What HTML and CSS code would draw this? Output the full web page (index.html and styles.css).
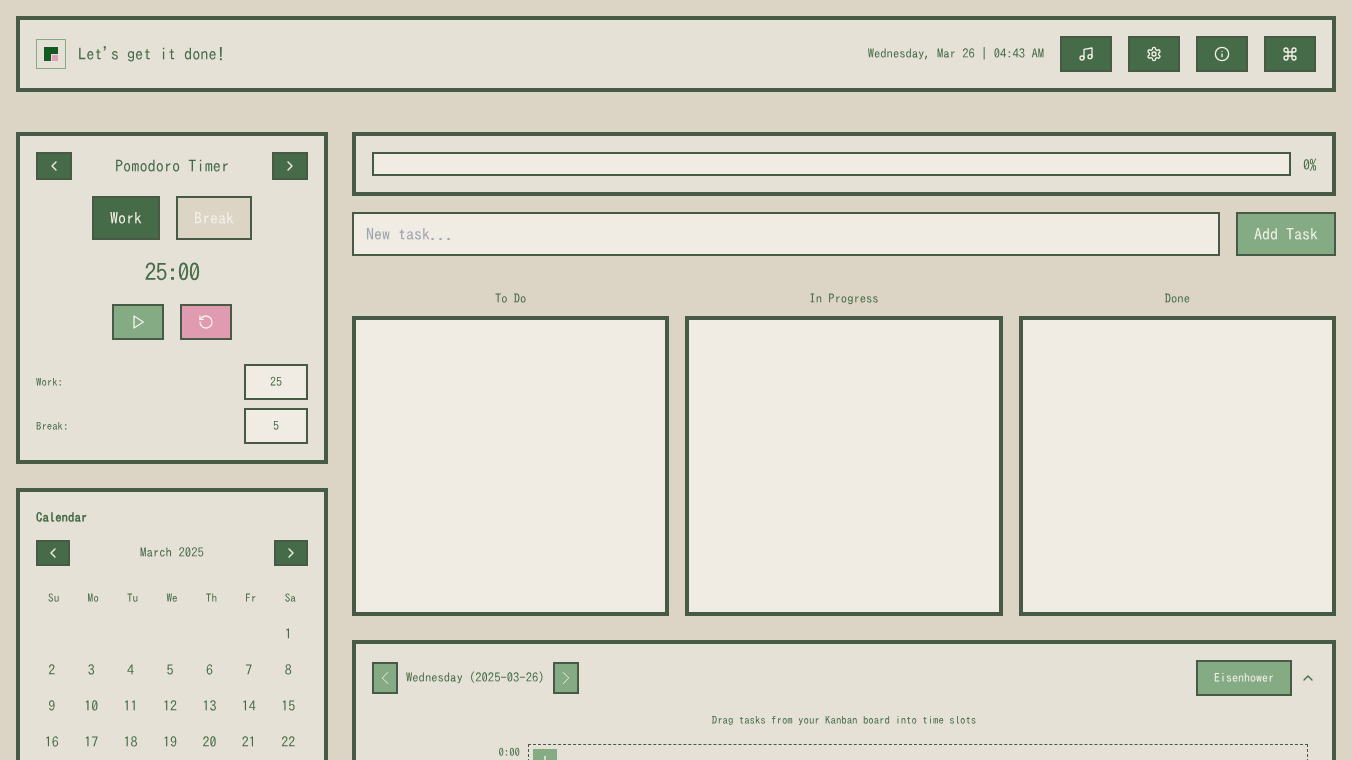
FILE: index.html
```html
<!DOCTYPE html>
<html lang="en">
<head>
<meta charset="utf-8">
<title>Let's get it done!</title>
<link rel="stylesheet" href="styles.css">
</head>
<body>
<header class="panel header">
  <div class="brand">
    <svg class="logo" viewBox="0 0 30 30" width="30" height="30"><rect x="0.5" y="0.5" width="29" height="29" fill="none" stroke="#85ab85"/><rect x="8" y="8" width="14" height="14" fill="#145a22"/><rect x="15" y="15" width="7" height="7" fill="#e4dfd3"/><rect x="16" y="16" width="6" height="6" fill="#e3a0b6"/></svg>
    <span class="brand-text">Let's get it done!</span>
  </div>
  <div class="header-right">
    <span class="clock">Wednesday, Mar 26 | 04:43 AM</span>
    <button class="btn dark icon-btn"><svg class="ico" viewBox="0 0 24 24"><path d="M9 18V5l12-2v13"/><circle cx="6" cy="18" r="3"/><circle cx="18" cy="16" r="3"/></svg></button>
    <button class="btn dark icon-btn"><svg class="ico" viewBox="0 0 24 24"><path d="M12.22 2h-.44a2 2 0 0 0-2 2v.18a2 2 0 0 1-1 1.73l-.43.25a2 2 0 0 1-2 0l-.15-.08a2 2 0 0 0-2.73.73l-.22.38a2 2 0 0 0 .73 2.73l.15.1a2 2 0 0 1 1 1.72v.51a2 2 0 0 1-1 1.74l-.15.09a2 2 0 0 0-.73 2.73l.22.38a2 2 0 0 0 2.73.73l.15-.08a2 2 0 0 1 2 0l.43.25a2 2 0 0 1 1 1.73V20a2 2 0 0 0 2 2h.44a2 2 0 0 0 2-2v-.18a2 2 0 0 1 1-1.73l.43-.25a2 2 0 0 1 2 0l.15.08a2 2 0 0 0 2.73-.73l.22-.39a2 2 0 0 0-.73-2.73l-.15-.08a2 2 0 0 1-1-1.74v-.5a2 2 0 0 1 1-1.74l.15-.09a2 2 0 0 0 .73-2.73l-.22-.38a2 2 0 0 0-2.73-.73l-.15.08a2 2 0 0 1-2 0l-.43-.25a2 2 0 0 1-1-1.73V4a2 2 0 0 0-2-2z"/><circle cx="12" cy="12" r="3"/></svg></button>
    <button class="btn dark icon-btn"><svg class="ico" viewBox="0 0 24 24"><circle cx="12" cy="12" r="10"/><path d="M12 16v-4"/><path d="M12 8h.01"/></svg></button>
    <button class="btn dark icon-btn"><svg class="ico" viewBox="0 0 24 24"><path d="M15 6v12a3 3 0 1 0 3-3H6a3 3 0 1 0 3 3V6a3 3 0 1 0-3 3h12a3 3 0 1 0-3-3"/></svg></button>
  </div>
</header>

<div class="layout">
  <aside class="side">
    <section class="panel pomo">
      <div class="pomo-top">
        <button class="btn dark nav"><svg class="ico" viewBox="0 0 24 24"><path d="m15 18-6-6 6-6"/></svg></button>
        <h2 class="pomo-title">Pomodoro Timer</h2>
        <button class="btn dark nav"><svg class="ico" viewBox="0 0 24 24"><path d="m9 18 6-6-6-6"/></svg></button>
      </div>
      <div class="modes">
        <button class="btn dark mode">Work</button>
        <button class="btn tan mode">Break</button>
      </div>
      <div class="time">25:00</div>
      <div class="controls">
        <button class="btn green ctl"><svg class="ico" viewBox="0 0 24 24"><path d="M6 3l14 9-14 9z"/></svg></button>
        <button class="btn pink ctl"><svg class="ico" viewBox="0 0 24 24"><path d="M3 12a9 9 0 1 0 9-9 9.75 9.75 0 0 0-6.74 2.74L3 8"/><path d="M3 3v5h5"/></svg></button>
      </div>
      <div class="setting"><label class="setting-label">Work:</label><input class="num" value="25"></div>
      <div class="setting"><label class="setting-label">Break:</label><input class="num" value="5"></div>
    </section>

    <section class="panel cal">
      <h3 class="cal-title">Calendar</h3>
      <div class="cal-nav">
        <button class="btn dark cal-btn"><svg class="ico" viewBox="0 0 24 24"><path d="m15 18-6-6 6-6"/></svg></button>
        <span class="cal-month">March 2025</span>
        <button class="btn dark cal-btn"><svg class="ico" viewBox="0 0 24 24"><path d="m9 18 6-6-6-6"/></svg></button>
      </div>
      <div class="cal-grid">
        <div class="dow">Su</div><div class="dow">Mo</div><div class="dow">Tu</div><div class="dow">We</div><div class="dow">Th</div><div class="dow">Fr</div><div class="dow">Sa</div>
        <div class="day"></div><div class="day"></div><div class="day"></div><div class="day"></div><div class="day"></div><div class="day"></div><div class="day">1</div>
        <div class="day">2</div><div class="day">3</div><div class="day">4</div><div class="day">5</div><div class="day">6</div><div class="day">7</div><div class="day">8</div>
        <div class="day">9</div><div class="day">10</div><div class="day">11</div><div class="day">12</div><div class="day">13</div><div class="day">14</div><div class="day">15</div>
        <div class="day">16</div><div class="day">17</div><div class="day">18</div><div class="day">19</div><div class="day">20</div><div class="day">21</div><div class="day">22</div>
        <div class="day">23</div><div class="day">24</div><div class="day">25</div><div class="day">26</div><div class="day">27</div><div class="day">28</div><div class="day">29</div>
        <div class="day">30</div><div class="day">31</div>
      </div>
    </section>
  </aside>

  <main class="main">
    <section class="panel progress">
      <div class="bar"></div>
      <span class="pct">0%</span>
    </section>
    <div class="add-row">
      <input class="task-input" placeholder="New task...">
      <button class="btn green add">Add Task</button>
    </div>
    <div class="board">
      <div class="col"><h4 class="col-title">To Do</h4><div class="col-box"></div></div>
      <div class="col"><h4 class="col-title">In Progress</h4><div class="col-box"></div></div>
      <div class="col"><h4 class="col-title">Done</h4><div class="col-box"></div></div>
    </div>
    <section class="panel sched">
      <div class="sched-top">
        <div class="sched-left">
          <button class="btn green day-btn"><svg class="ico thin" viewBox="0 0 24 24"><path d="m15 18-6-6 6-6"/></svg></button>
          <span class="sched-date">Wednesday (2025-03-26)</span>
          <button class="btn green day-btn"><svg class="ico thin" viewBox="0 0 24 24"><path d="m9 18 6-6-6-6"/></svg></button>
        </div>
        <div class="sched-right">
          <button class="btn green eisen">Eisenhower</button>
          <svg class="ico chev" viewBox="0 0 24 24"><path d="m18 15-6-6-6 6"/></svg>
        </div>
      </div>
      <p class="hint">Drag tasks from your Kanban board into time slots</p>
      <div class="slot"><span class="slot-time">0:00</span><div class="slot-box"><button class="plus"><svg class="ico" viewBox="0 0 24 24"><path d="M5 12h14"/><path d="M12 5v14"/></svg></button></div></div>
      <div class="slot"><span class="slot-time">1:00</span><div class="slot-box"><button class="plus"><svg class="ico" viewBox="0 0 24 24"><path d="M5 12h14"/><path d="M12 5v14"/></svg></button></div></div>
    </section>
  </main>
</div>
</body>
</html>
```
FILE: styles.css
```css
* { box-sizing: border-box; }
html, body { margin: 0; }
body {
  padding: 16px;
  background: #dcd5c6;
  color: #466b48;
  font-family: "IPAGothic", "Noto Sans Mono CJK JP", monospace;
  font-size: 16px;
  line-height: 24px;
  text-rendering: geometricPrecision;
  will-change: transform;
}
h2, h3, h4, p { margin: 0; font-weight: 400; }
button { font-family: inherit; cursor: pointer; padding: 0; text-rendering: inherit; }
input { font-family: inherit; text-rendering: inherit; }

.panel { background: #e5e1d6; border: 4px solid #465a46; }
.btn {
  display: flex; align-items: center; justify-content: center;
  border: 2px solid #465a46; color: #f5f1e8; font-size: 16px; line-height: 24px;
}
.dark { background: #466b48; }
.tan { background: #dcd5c6; }
.green { background: #84ab84; }
.pink { background: #e09bb0; }
.ico { width: 16px; height: 16px; fill: none; stroke: currentColor; stroke-width: 2; stroke-linecap: round; stroke-linejoin: round; display: block; }
.thin { width: 22px; height: 22px; stroke-width: 1; }

.header { height: 76px; padding: 0 16px; display: flex; align-items: center; justify-content: space-between; }
.brand { display: flex; align-items: center; gap: 12px; }
.logo { display: block; }
.brand-text { font-size: 16.32px; }
.header-right { display: flex; align-items: center; gap: 16px; }
.clock { font-size: 12.6px; }
.icon-btn { width: 52px; height: 36px; }

.layout { display: flex; gap: 24px; margin-top: 40px; align-items: flex-start; }
.side { width: 312px; flex: none; display: flex; flex-direction: column; gap: 24px; }
.main { flex: 1; min-width: 0; display: flex; flex-direction: column; }

.pomo { padding: 16px; }
.pomo-top { display: flex; align-items: center; justify-content: space-between; }
.nav { width: 36px; height: 28px; }
.pomo-title { font-size: 16.32px; }
.modes { display: flex; justify-content: center; gap: 16px; margin-top: 16px; }
.mode { height: 44px; padding: 0 16px; }
.time { font-size: 24px; letter-spacing: -1px; line-height: 32px; text-align: center; margin-top: 16px; }
.controls { display: flex; justify-content: center; gap: 16px; margin-top: 16px; }
.ctl { width: 52px; height: 36px; }
.setting { display: flex; align-items: center; justify-content: space-between; margin-top: 8px; }
.controls + .setting { margin-top: 24px; }
.setting-label { font-size: 10.8px; padding-top: 2px; }
.num { width: 64px; height: 36px; border: 2px solid #465a46; background: #f0ece4; color: #466b48; font-size: 12px; text-align: center; padding: 0; }

.cal { padding: 16px; }
.cal-title { font-size: 12.8px; font-weight: 700; line-height: 20px; }
.cal-nav { display: flex; align-items: center; justify-content: space-between; margin-top: 12px; }
.cal-btn { width: 34px; height: 26px; }
.cal-month { font-size: 12.8px; }
.cal-grid { display: grid; grid-template-columns: repeat(7, 1fr); gap: 4px; margin-top: 16px; }
.dow { height: 32px; display: flex; align-items: center; justify-content: center; font-size: 11.2px; padding-top: 2px; }
.day { height: 32px; display: flex; align-items: center; justify-content: center; font-size: 14px; padding-right: 4px; }

.progress { height: 64px; padding: 0 16px; display: flex; align-items: center; gap: 12px; }
.bar { flex: 1; height: 24px; border: 2px solid #465a46; background: #f0ece4; }
.pct { font-size: 14px; letter-spacing: -0.5px; padding-top: 1px; }
.add-row { display: flex; gap: 16px; margin-top: 16px; }
.task-input { flex: 1; min-width: 0; height: 44px; border: 2px solid #465a46; background: #f0ece4; font-size: 16px; padding: 0 12px; color: #466b48; }
.task-input::placeholder { color: #9ca3af; opacity: 1; }
.add { height: 44px; padding: 0 16px; }

.board { display: grid; grid-template-columns: repeat(3, 1fr); gap: 16px; margin-top: 24px; }
.col-title { font-size: 12.6px; line-height: 20px; text-align: center; margin-top: 9px; margin-bottom: 7px; }
.col-box { height: 300px; border: 4px solid #465a46; background: #f0ece4; }

.sched { margin-top: 24px; padding: 16px; }
.sched-top { display: flex; align-items: center; justify-content: space-between; }
.sched-left { display: flex; align-items: center; gap: 8px; }
.day-btn { width: 26px; height: 32px; }
.sched-date { font-size: 12.6px; }
.sched-right { display: flex; align-items: center; gap: 8px; }
.eisen { width: 96px; height: 36px; font-size: 12px; }
.chev { width: 16px; }
.hint { font-size: 10.8px; line-height: 16px; text-align: center; margin-top: 17px; }
.slot { display: flex; gap: 8px; margin-top: 15px; padding-right: 8px; }
.slot-time { width: 148px; text-align: right; font-size: 10.8px; line-height: 16px; padding-top: 1px; }
.slot-box { flex: 1; height: 48px; border: 1px dashed #465a46; padding: 4px; }
.plus { width: 24px; height: 24px; background: #84ab84; border: 0; color: #f5f1e8; display: flex; align-items: center; justify-content: center; }
```
